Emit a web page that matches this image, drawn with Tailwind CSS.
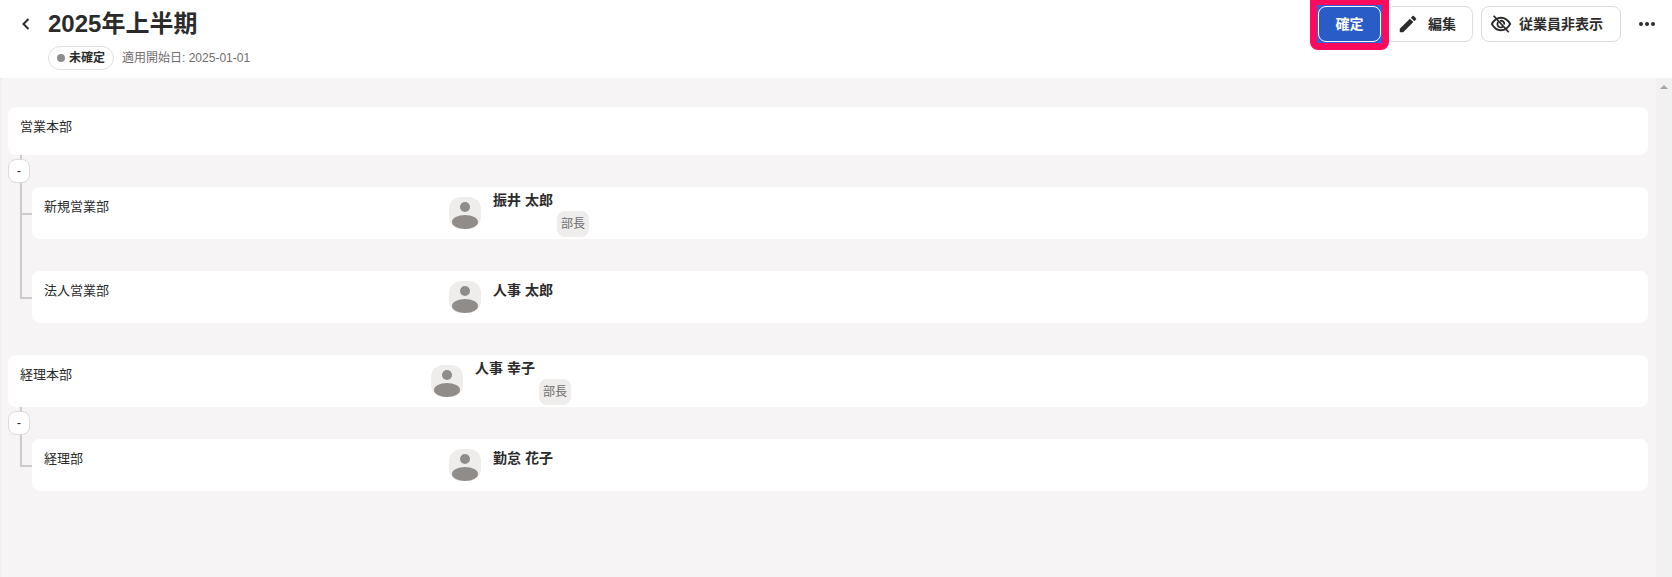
<!DOCTYPE html>
<html lang="ja">
<head>
    <meta charset="UTF-8">
    <title>2025年上半期</title>
    <script src="https://cdn.jsdelivr.net/npm/@tailwindcss/browser@4"></script>
</head>
<body class="h-[577px] overflow-hidden bg-[#f6f4f4] text-[#2b2b2b] font-['Liberation_Sans','Noto_Sans_CJK_JP',sans-serif]">
    <!-- header -->
    <header class="h-[78px] bg-white flex justify-between pl-[18px] pr-[17px]">
        <div class="flex">
            <button class="w-[16px] h-[16px] mt-[16px] mr-[14px] flex items-center justify-center">
                <svg width="16" height="16" viewBox="0 0 16 16" fill="none" stroke="#2b2b2b" stroke-width="2"><path d="M10.500 3 5.500 8l5 5"/></svg>
            </button>
            <div>
                <h1 class="text-[24px] leading-[24px] font-bold mt-[12px]">2025年上半期</h1>
                <div class="flex items-center mt-[10px]">
                    <span class="h-[24px] px-[8px] flex items-center gap-[4px] rounded-full border border-[#e2e0e0] text-[12px] font-bold">
                        <span class="w-[8px] h-[8px] rounded-full bg-[#8f8c8c]"></span>未確定
                    </span>
                    <span class="ml-[8px] text-[12px] text-[#6f6c6c]">適用開始日: 2025-01-01</span>
                </div>
            </div>
        </div>
        <div class="flex items-start">
            <div class="relative z-10 bg-[#ff0a5c] rounded-b-[8px] px-[7px] pt-[5px] h-[50px] mr-[-4px]">
                <div class="w-[65px] h-[38px] bg-[#2f62dc] p-[1px]">
                    <button class="w-full h-full block bg-[#2a5cc8] border border-white rounded-[8px] text-white text-[14px] font-bold">確定</button>
                </div>
            </div>
            <button class="h-[36px] w-[88px] mt-[6px] bg-white border border-[#dcdada] rounded-[8px] flex items-center pl-[11px] text-[14px] font-semibold">
                <svg class="mr-[9px]" width="22" height="22" viewBox="0 0 24 24" fill="#2b2b2b"><path d="M3 17.250V21h3.750L17.810 9.940l-3.750-3.750L3 17.250zM20.710 7.040a1 1 0 0 0 0-1.410l-2.340-2.340a1 1 0 0 0-1.410 0l-1.830 1.830 3.750 3.750 1.830-1.830z"/></svg>編集
            </button>
            <button class="h-[36px] w-[140px] mt-[6px] ml-[8px] bg-white border border-[#dcdada] rounded-[8px] flex items-center pl-[8px] text-[14px] font-semibold">
                <svg class="mr-[7px]" width="22" height="22" viewBox="0 0 24 24" fill="none" stroke="#2b2b2b" stroke-width="2"><path d="M2 12c2.500-4.500 6-6.800 10-6.800S19.500 7.500 22 12c-2.500 4.500-6 6.800-10 6.800S4.500 16.500 2 12z"/><path d="M9 9.800a3.500 3.500 0 0 0 5.200 4.800M11 8.600a3.500 3.500 0 0 1 4.500 4"/><path d="M4 3l16.500 18"/></svg>従業員非表示
            </button>
            <button class="ml-[18px] mt-[22px] flex gap-[2px]">
                <span class="w-[4px] h-[4px] rounded-full bg-[#2b2b2b]"></span>
                <span class="w-[4px] h-[4px] rounded-full bg-[#2b2b2b]"></span>
                <span class="w-[4px] h-[4px] rounded-full bg-[#2b2b2b]"></span>
            </button>
        </div>
    </header>

    <div class="flex h-[499px]">
        <!-- org tree -->
        <main class="flex-1 pt-[29px] pl-[8px] pr-[8px] border-l-2 border-[#f0eeee]">
            <section class="-ml-[2px]">
                <div class="h-[48px] bg-white rounded-[8px] pl-[12px] pt-[10px] text-[13px] leading-[20px]">営業本部</div>
                <div class="relative pl-[24px] pt-[32px]">
                    <div class="absolute left-[12px] top-0 w-[2px] h-[144px] bg-[#cccaca]"></div>
                    <div class="absolute left-0 top-[4px] w-[22px] h-[24px] bg-white border border-[#dcdada] rounded-[8px] flex items-center justify-center text-[13px]">-</div>
                    <div class="absolute left-[12px] top-[58px] w-[12px] h-[2px] bg-[#cccaca]"></div>
                    <div class="absolute left-[12px] top-[142px] w-[12px] h-[2px] bg-[#cccaca]"></div>
                    <div class="h-[52px] bg-white rounded-[8px] flex pl-[12px] pt-[10px] text-[13px] leading-[20px]">
                        <div class="w-[405px]">新規営業部</div>
                        <div class="flex">
                            <svg class="w-[32px] h-[32px]" viewBox="0 0 32 32"><rect width="32" height="32" rx="12" fill="#eeedeb"/><circle cx="16" cy="10" r="5" fill="#8f8c8a"/><ellipse cx="16" cy="25" rx="13" ry="7" fill="#8f8c8a"/></svg>
                            <div class="ml-[12px] -mt-[6px] w-[96px]">
                                <div class="text-[14px] font-semibold leading-[18px]">振井 太郎</div>
                                <div class="ml-[64px] mt-[2px] w-[32px] h-[26px] rounded-[8px] bg-[#eeedeb] text-[12px] text-[#6f6c6c] flex items-center justify-center">部長</div>
                            </div>
                        </div>
                    </div>
                    <div class="mt-[32px] h-[52px] bg-white rounded-[8px] flex pl-[12px] pt-[10px] text-[13px] leading-[20px]">
                        <div class="w-[405px]">法人営業部</div>
                        <div class="flex">
                            <svg class="w-[32px] h-[32px]" viewBox="0 0 32 32"><rect width="32" height="32" rx="12" fill="#eeedeb"/><circle cx="16" cy="10" r="5" fill="#8f8c8a"/><ellipse cx="16" cy="25" rx="13" ry="7" fill="#8f8c8a"/></svg>
                            <div class="ml-[12px] text-[14px] font-semibold leading-[18px]">人事 太郎</div>
                        </div>
                    </div>
                </div>
            </section>
            <section class="-ml-[2px] mt-[32px]">
                <div class="h-[52px] bg-white rounded-[8px] flex pl-[12px] pt-[10px] text-[13px] leading-[20px]">
                    <div class="w-[411px]">経理本部</div>
                    <div class="flex">
                        <svg class="w-[32px] h-[32px]" viewBox="0 0 32 32"><rect width="32" height="32" rx="12" fill="#eeedeb"/><circle cx="16" cy="10" r="5" fill="#8f8c8a"/><ellipse cx="16" cy="25" rx="13" ry="7" fill="#8f8c8a"/></svg>
                        <div class="ml-[12px] -mt-[6px] w-[96px]">
                            <div class="text-[14px] font-semibold leading-[18px]">人事 幸子</div>
                            <div class="ml-[64px] mt-[2px] w-[32px] h-[26px] rounded-[8px] bg-[#eeedeb] text-[12px] text-[#6f6c6c] flex items-center justify-center">部長</div>
                        </div>
                    </div>
                </div>
                <div class="relative pl-[24px] pt-[32px]">
                    <div class="absolute left-[12px] top-0 w-[2px] h-[60px] bg-[#cccaca]"></div>
                    <div class="absolute left-0 top-[4px] w-[22px] h-[24px] bg-white border border-[#dcdada] rounded-[8px] flex items-center justify-center text-[13px]">-</div>
                    <div class="absolute left-[12px] top-[58px] w-[12px] h-[2px] bg-[#cccaca]"></div>
                    <div class="h-[52px] bg-white rounded-[8px] flex pl-[12px] pt-[10px] text-[13px] leading-[20px]">
                        <div class="w-[405px]">経理部</div>
                        <div class="flex">
                            <svg class="w-[32px] h-[32px]" viewBox="0 0 32 32"><rect width="32" height="32" rx="12" fill="#eeedeb"/><circle cx="16" cy="10" r="5" fill="#8f8c8a"/><ellipse cx="16" cy="25" rx="13" ry="7" fill="#8f8c8a"/></svg>
                            <div class="ml-[12px] text-[14px] font-semibold leading-[18px]">勤怠 花子</div>
                        </div>
                    </div>
                </div>
            </section>
        </main>
        <!-- scrollbar -->
        <div class="w-[16px] bg-[#f1f1f1] flex justify-center pt-[7px]">
            <div class="w-0 h-0 border-x-[4px] border-x-transparent border-b-[4px] border-b-[#a3a3a3]"></div>
        </div>
    </div>
</body>
</html>
